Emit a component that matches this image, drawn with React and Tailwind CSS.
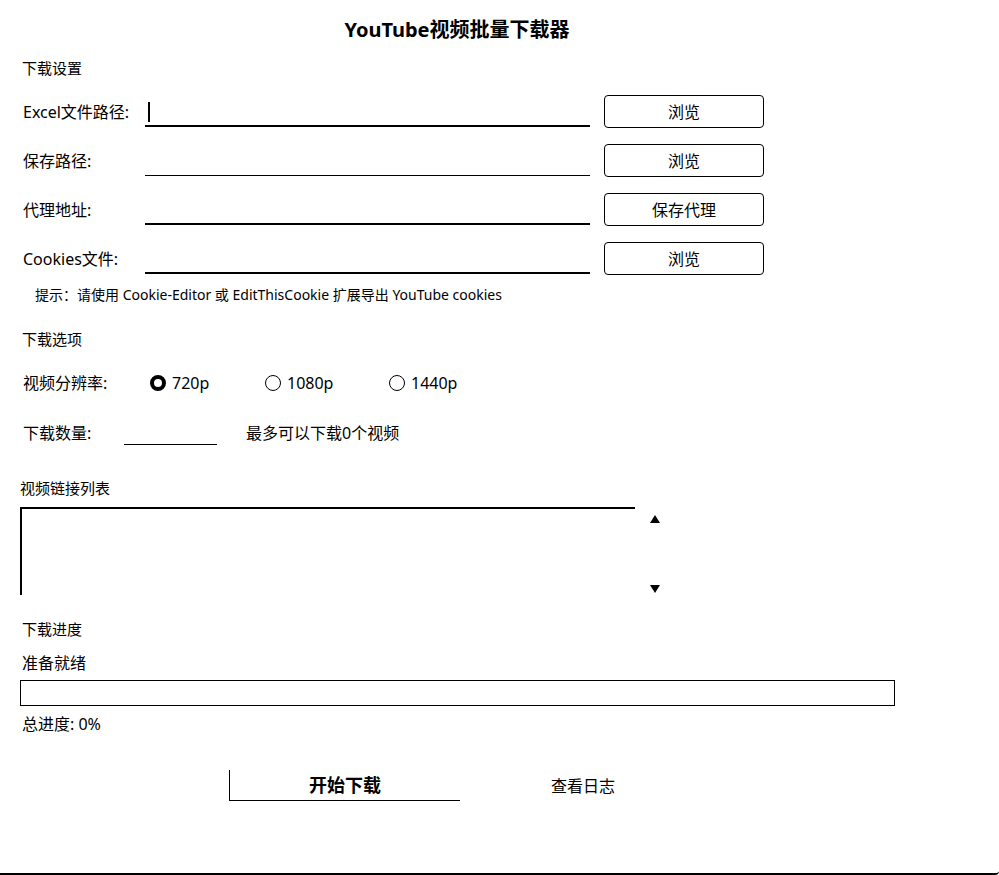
import React, { useState } from "react";

const FONT = { fontFamily: '"Noto Sans", "Noto Sans CJK SC", sans-serif' };

function PathRow({ label, button, focused, thin }) {
  return (
    <div className="h-[49px] flex items-center">
      <div className="w-[145px] pl-[23px] text-[16px] leading-none">{label}</div>
      <div className={`w-[445px] h-[30px] relative ${thin ? "border-b" : "border-b-2"} border-black`}>
        {focused && <span className="absolute left-[3px] top-[5px] w-[2px] h-[20px] bg-black" />}
      </div>
      <button className="ml-[14px] w-[160px] h-[33px] border border-black rounded-[4px] text-[16px] leading-none">
        {button}
      </button>
    </div>
  );
}

function Radio({ checked, label, onClick, width }) {
  return (
    <button onClick={onClick} className={`${width} flex items-center gap-[6px] text-[16px] leading-none`}>
      <span
        className={`w-[16px] h-[16px] rounded-full border-black ${checked ? "border-[4px]" : "border-[1.5px]"}`}
      />
      {label}
    </button>
  );
}

export default function App() {
  const [res, setRes] = useState("720p");

  return (
    <div style={FONT} className="w-[999px] h-[875px] bg-white text-black relative border-b-2 border-black rounded-br-[4px]">
      <div className="w-[914px] h-[60px] flex items-center justify-center">
        <h1 className="text-[20px] font-bold leading-none">YouTube视频批量下载器</h1>
      </div>

      <div className="h-[16px] flex items-center pl-[22px] text-[15px] leading-none">下载设置</div>

      <div className="mt-[11px]">
        <PathRow label="Excel文件路径:" button="浏览" focused />
        <PathRow label="保存路径:" button="浏览" thin />
        <PathRow label="代理地址:" button="保存代理" />
        <PathRow label="Cookies文件:" button="浏览" />
      </div>

      <div className="h-[24px] flex items-center pl-[35px] text-[14px] leading-none">
        提示：请使用 Cookie-Editor 或 EditThisCookie 扩展导出 YouTube cookies
      </div>

      <div className="mt-[24px] h-[16px] flex items-center pl-[22px] text-[15px] leading-none">下载选项</div>

      <div className="mt-[11px] h-[50px] flex items-center">
        <div className="w-[150px] pl-[23px] text-[16px] leading-none">视频分辨率:</div>
        <Radio width="w-[115px]" checked={res === "720p"} label="720p" onClick={() => setRes("720p")} />
        <Radio width="w-[124px]" checked={res === "1080p"} label="1080p" onClick={() => setRes("1080p")} />
        <Radio width="w-[100px]" checked={res === "1440p"} label="1440p" onClick={() => setRes("1440p")} />
      </div>

      <div className="h-[50px] flex items-center">
        <div className="w-[124px] pl-[23px] text-[16px] leading-none">下载数量:</div>
        <div className="w-[93px] h-[24px] border-b border-black" />
        <div className="ml-[29px] text-[16px] leading-none">最多可以下载0个视频</div>
      </div>

      <div className="mt-[22px] h-[16px] flex items-center pl-[20px] text-[15px] leading-none">视频链接列表</div>

      <div className="mt-[11px] h-[88px] flex pl-[20px]">
        <div className="w-[615px] h-full border-t-2 border-l-2 border-black" />
        <div className="ml-[14px] w-[12px] h-full flex flex-col items-center justify-between pt-[8px] pb-[2px]">
          <span className="w-0 h-0 border-l-[5px] border-r-[5px] border-b-[8px] border-l-transparent border-r-transparent border-b-black" />
          <span className="w-0 h-0 border-l-[5px] border-r-[5px] border-t-[8px] border-l-transparent border-r-transparent border-t-black" />
        </div>
      </div>

      <div className="mt-[26px] h-[16px] flex items-center pl-[22px] text-[15px] leading-none">下载进度</div>
      <div className="mt-[17px] h-[18px] flex items-center pl-[22px] text-[16px] leading-none">准备就绪</div>
      <div className="mt-[8px] ml-[20px] w-[875px] h-[26px] border border-black" />
      <div className="mt-[9px] h-[18px] flex items-center pl-[22px] text-[16px] leading-none">总进度: 0%</div>

      <div className="mt-[37px] h-[31px] flex pl-[229px]">
        <button className="w-[231px] h-full border-l border-b border-black text-[18px] font-bold leading-none">
          开始下载
        </button>
        <button className="ml-[8px] w-[230px] h-full text-[16px] leading-none">查看日志</button>
      </div>
    </div>
  );
}
